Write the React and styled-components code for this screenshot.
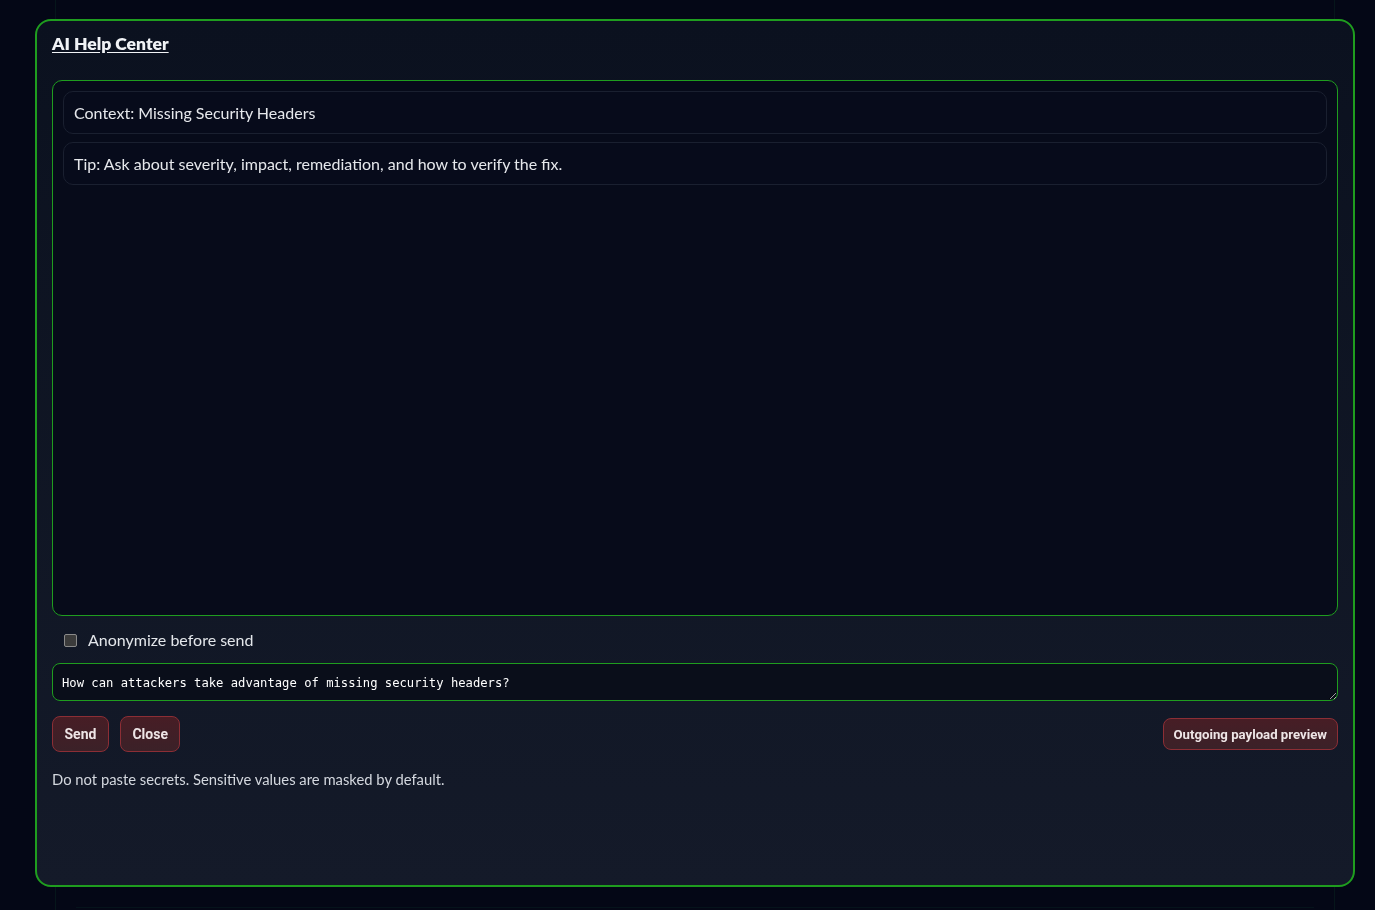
import React, { useState } from "react";
import styled, { createGlobalStyle } from "styled-components";

const GlobalStyle = createGlobalStyle`
  html, body {
    margin: 0;
    padding: 0;
    background: #050818;
    font-family: Lato, "Noto Sans", sans-serif;
    color: #e5e7eb;
  }
  * { box-sizing: border-box; }
`;

// Page sitting behind the modal
const Page = styled.div`
  min-height: 100vh;
  padding: 0 40px 0 55px;
`;

const PageCard = styled.div`
  height: 910px;
  border-left: 1px solid rgba(34, 197, 94, 0.12);
  border-right: 1px solid rgba(34, 197, 94, 0.12);
  display: flex;
  align-items: flex-end;
  padding: 0 20px 2px;
`;

const PageRule = styled.div`
  flex: 1;
  height: 1px;
  background: rgba(34, 197, 94, 0.1);
`;

// Modal overlay
const Overlay = styled.div`
  position: fixed;
  inset: 0;
  padding: 19px 20px 23px 35px;
  display: flex;
  background: rgba(3, 6, 20, 0.35);
`;

const Modal = styled.div`
  flex: 1;
  display: flex;
  flex-direction: column;
  border: 2px solid #1f9d1f;
  border-radius: 16px;
  background: linear-gradient(180deg, #0b111f 0%, #141a29 100%);
  padding: 13px 15px 15px;
`;

const Title = styled.h2`
  margin: 0 0 26px;
  font-size: 17.5px;
  line-height: 20px;
  font-weight: 800;
  text-decoration: underline;
  text-underline-offset: 2px;
  color: #f1f3f6;
`;

const ChatBox = styled.div`
  height: 536px;
  border: 1px solid #1f9d1f;
  border-radius: 10px;
  background: #070b1a;
  padding: 10px;
  display: flex;
  flex-direction: column;
  gap: 8px;
`;

const Message = styled.div`
  border: 1px solid #1a2030;
  border-radius: 10px;
  background: #070b1b;
  padding: 11px 10px;
  font-size: 16px;
  line-height: 19px;
  color: #e6e8ec;
`;

const CheckRow = styled.label`
  display: flex;
  align-items: center;
  gap: 11px;
  padding: 0 12px;
  margin: 14px 0 13px;
  font-size: 16px;
  line-height: 20px;
  color: #e3e6ea;
`;

const Check = styled.input`
  appearance: none;
  margin: 0;
  width: 13px;
  height: 13px;
  border: 1px solid #8a8a8a;
  border-radius: 2px;
  background: #3b3b3b;
`;

const Prompt = styled.textarea`
  display: block;
  width: 100%;
  height: 38px;
  border: 1px solid #1f9d1f;
  border-radius: 8px;
  background: #0a0e1a;
  color: #ffffff;
  font-family: "DejaVu Sans Mono", monospace;
  font-size: 12.2px;
  line-height: 16px;
  padding: 11px 9px 9px;
  outline: none;
`;

const Actions = styled.div`
  display: flex;
  align-items: center;
  gap: 11px;
  margin-top: 15px;
`;

const Spacer = styled.div`
  flex: 1;
`;

const Button = styled.button`
  font-family: Roboto, "Liberation Sans", sans-serif;
  font-weight: 700;
  font-size: ${(p) => (p.$small ? "13.2px" : "14px")};
  line-height: 17px;
  color: #eee5e6;
  background: linear-gradient(180deg, #471d25 0%, #3b2128 100%);
  border: 1px solid #8c2e35;
  border-radius: 8px;
  padding: ${(p) => (p.$small ? "6.5px 10px" : "8.5px 11.5px")};
  cursor: pointer;
`;

const Note = styled.p`
  margin: 18px 0 0;
  font-size: 14.8px;
  line-height: 18px;
  color: #d3d7de;
`;

export default function App() {
  const [anon, setAnon] = useState(false);
  const [text, setText] = useState(
    "How can attackers take advantage of missing security headers?"
  );

  return (
    <>
      <GlobalStyle />
      <Page>
        <PageCard>
          <PageRule />
        </PageCard>
      </Page>
      <Overlay>
        <Modal>
          <Title>AI Help Center</Title>
          <ChatBox>
            <Message>Context: Missing Security Headers</Message>
            <Message>
              Tip: Ask about severity, impact, remediation, and how to verify the fix.
            </Message>
          </ChatBox>
          <CheckRow>
            <Check
              type="checkbox"
              checked={anon}
              onChange={(e) => setAnon(e.target.checked)}
            />
            Anonymize before send
          </CheckRow>
          <Prompt value={text} onChange={(e) => setText(e.target.value)} />
          <Actions>
            <Button>Send</Button>
            <Button>Close</Button>
            <Spacer />
            <Button $small>Outgoing payload preview</Button>
          </Actions>
          <Note>Do not paste secrets. Sensitive values are masked by default.</Note>
        </Modal>
      </Overlay>
    </>
  );
}
